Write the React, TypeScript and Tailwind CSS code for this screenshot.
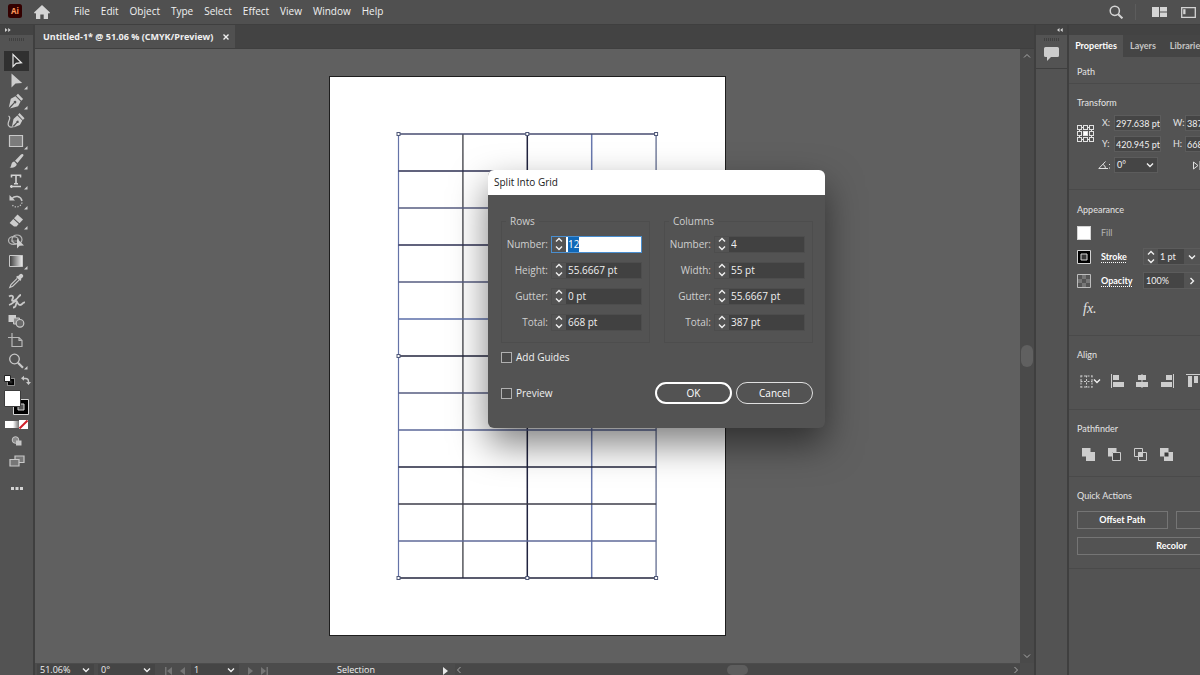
import { useEffect, useRef } from 'react';
import type { ReactNode } from 'react';

const MENUS = ['File', 'Edit', 'Object', 'Type', 'Select', 'Effect', 'View', 'Window', 'Help'];

interface Tool {
  name: string;
  hasMore?: boolean;
  icon: ReactNode;
}

const TOOLS: Tool[] = [
  {
    name: 'Selection',
    icon: <path d="M6 2.5v12l3.2-3.2 5.3-.6z" fill="none" stroke="#e6e6e6" strokeWidth="1.2" />,
  },
  { name: 'Direct Selection', hasMore: true, icon: <path d="M4.5 1.5v14l4-4 6.700-.5z" /> },
  {
    name: 'Pen',
    hasMore: true,
    icon: (
      <>
        <path d="M11 1.700 16.100 7l-1.800 1.800L9.200 3.500z" />
        <path d="m8.400 4.300 5.200 5.200-2.500 4.800L3 16.500l4.600-5.200a1.300 1.300 0 1 0-.8-.8L1.800 15.500l2-8.700z" />
      </>
    ),
  },
  {
    name: 'Curvature',
    icon: (
      <>
        <path d="M12.500 1 17.500 6.200l-1.600 1.700L11 2.700z" />
        <path d="m10.300 3.500 5 5.100-2.400 4.500L6.500 15.500l3.700-4.500a1.200 1.200 0 1 0-.8-.7l-4.500 4.500L6.500 7z" />
        <path d="M1.500 4c4 2-2 6 0 9.500 1 2 3 2 5 1" fill="none" stroke="#c8c8c8" strokeWidth="1.200" />
      </>
    ),
  },
  {
    name: 'Rectangle',
    hasMore: true,
    icon: <path d="M2.500 3.500h13v11h-13z" fill="#7c7c7c" stroke="#c8c8c8" strokeWidth="1.200" />,
  },
  {
    name: 'Paintbrush',
    hasMore: true,
    icon: (
      <>
        <path d="M16 2.200c.8.7.5 1.300 0 2L10.500 11 8 8.800 14 2.600c.7-.7 1.300-1 2-.4z" />
        <path d="M7.300 9.500 9.700 12c-.2 3-3.500 4-7.200 3.600 1.800-.8 1.500-2 2-3.600.4-1.400 1.500-2.300 2.800-2.500z" />
      </>
    ),
  },
  {
    name: 'Type',
    hasMore: true,
    icon: (
      <path
        d="M4.500 5.500V3.300h9v2.200M9 3.300v8.400M7 11.700h4M3 14.500h11M4.500 13v3"
        fill="none"
        stroke="#d2d2d2"
        strokeWidth="1.600"
      />
    ),
  },
  {
    name: 'Rotate',
    hasMore: true,
    icon: (
      <>
        <path d="M5 6.500C8 3 14 4 15 9" fill="none" stroke="#c8c8c8" strokeWidth="1.500" />
        <path d="M2.500 3v5.500H8z" />
        <path
          d="M15 10.500c-1 5-8 6-10.500 1.500"
          fill="none"
          stroke="#c8c8c8"
          strokeWidth="1.200"
          strokeDasharray="1.200 1.500"
        />
      </>
    ),
  },
  {
    name: 'Eraser',
    hasMore: true,
    icon: (
      <>
        <path d="m10.500 2.500 5.500 5-3.500 3.700L7 6.200z" />
        <path d="m6.300 7 5.400 5-2.200 2.500H7L2.600 11z" />
      </>
    ),
  },
  {
    name: 'Shape Builder',
    icon: (
      <>
        <g fill="none" stroke="#b8b8b8" strokeWidth="1.200">
          <ellipse cx="6.500" cy="8.500" rx="5" ry="3.800" />
          <ellipse cx="10" cy="7.500" rx="5" ry="4.500" />
          <path d="M4 9h7" strokeDasharray="1.200 1" />
        </g>
        <path d="M10 6.500v10l2.600-2.800 4.400-.2z" />
      </>
    ),
  },
  {
    name: 'Gradient',
    hasMore: true,
    icon: <path d="M2.500 3.500h13v11h-13z" fill="url(#toolGradient)" stroke="#c8c8c8" />,
  },
  {
    name: 'Eyedropper',
    icon: (
      <>
        <path d="M15.500 2.500c1.200 1.200.8 2.200 0 3l-1.700 1.600.6.700-1.300 1.200-4-4 1.200-1.300.7.600 1.600-1.700c.9-.8 1.900-1.200 2.900-.1z" />
        <path
          d="M10.200 6.300 4 12.500 2.800 15.500l2.900-1.200L12 8.100"
          fill="none"
          stroke="#c8c8c8"
          strokeWidth="1.200"
        />
      </>
    ),
  },
  {
    name: 'Puppet Warp',
    icon: (
      <path
        d="M2 4.500c3-2 5 0 3.500 2.500s1 2.500 3.500.5 3-4.500 5-4.500M2 13c4-1 5-4 7-4s1 4 4 4 2-3 5-2.500M6 15.500c4 0 2-3 4-5.500"
        fill="none"
        stroke="#c8c8c8"
        strokeWidth="1.800"
      />
    ),
  },
  {
    name: 'Blend',
    icon: (
      <>
        <path d="M1.500 3h7.500v7H1.500z" />
        <path d="M6.500 6h6v6h-6z" fill="#8b8b8b" stroke="#c8c8c8" />
        <circle cx="13" cy="11.300" r="3.800" fill="#6a6a6a" stroke="#c8c8c8" strokeWidth="1.200" />
      </>
    ),
  },
  {
    name: 'Artboard',
    icon: (
      <path
        d="M5 1v13.500h10V8.500L12 5.500H1M12 5.500v3h3"
        fill="none"
        stroke="#b8b8b8"
        strokeWidth="1.200"
      />
    ),
  },
  {
    name: 'Zoom',
    hasMore: true,
    icon: (
      <g fill="none" stroke="#c8c8c8">
        <circle cx="7.500" cy="7" r="4.800" strokeWidth="1.300" />
        <path d="m11 10.800 5 5" strokeWidth="2.200" />
      </g>
    ),
  },
];

interface FieldProps {
  id: string;
  label: string;
  value: string;
  selected?: boolean;
}

const ROW_FIELDS: FieldProps[] = [
  { id: 'row-number', label: 'Number:', value: '12', selected: true },
  { id: 'row-height', label: 'Height:', value: '55.6667 pt' },
  { id: 'row-gutter', label: 'Gutter:', value: '0 pt' },
  { id: 'row-total', label: 'Total:', value: '668 pt' },
];

const COLUMN_FIELDS: FieldProps[] = [
  { id: 'col-number', label: 'Number:', value: '4' },
  { id: 'col-width', label: 'Width:', value: '55 pt' },
  { id: 'col-gutter', label: 'Gutter:', value: '55.6667 pt' },
  { id: 'col-total', label: 'Total:', value: '387 pt' },
];

type Direction = 'up' | 'down' | 'left' | 'right';

const CHEVRONS: Record<Direction, string> = {
  up: 'M1 5.500 4 2.500l3 3',
  down: 'M1 2.500l3 3 3-3',
  left: 'M5.500 1l-3 3 3 3',
  right: 'M2.500 1l3 3-3 3',
};

function Chevron({ dir, dim }: { dir: Direction; dim?: boolean }) {
  return (
    <svg viewBox="0 0 8 8" className="size-2 shrink-0" aria-hidden="true">
      <path d={CHEVRONS[dir]} fill="none" stroke={dim ? '#a8a8a8' : '#f0f0f0'} strokeWidth={dim ? 1 : 1.4} />
    </svg>
  );
}

function Stepper({ label }: { label: string }) {
  return (
    <div className="flex w-[14px] shrink-0 flex-col items-center justify-center">
      <button type="button" aria-label={`Increase ${label}`} className="flex">
        <Chevron dir="up" />
      </button>
      <button type="button" aria-label={`Decrease ${label}`} className="flex">
        <Chevron dir="down" />
      </button>
    </div>
  );
}

function MenuBar() {
  return (
    <header className="flex h-[25px] shrink-0 items-center border-b border-[#3f3f3f] bg-[#505050] pb-[2px] pr-1">
      <svg viewBox="0 0 14 14" className="ml-2 size-[14px]" aria-hidden="true">
        <rect width="14" height="14" rx="2.500" fill="#330000" />
        <text x="7" y="10" textAnchor="middle" fontSize="8" fontWeight="700" fill="#ff9a5a">
          Ai
        </text>
      </svg>
      <button type="button" aria-label="Home" className="ml-3 mt-[2px]">
        <svg viewBox="0 0 16 14" className="h-[14px] w-4" fill="#d4d4d4">
          <path d="M8 0 16 7.500l-1 1.200-1-.8V14H9.700V9.500H6.300V14H2V7.900l-1 .8L0 7.500z" />
        </svg>
      </button>
      <nav className="ml-6 flex gap-[11px]" aria-label="Main menu">
        {MENUS.map((menu) => (
          <button key={menu} type="button" className="text-[10px] leading-4 text-[#f0f0f0]">
            {menu}
          </button>
        ))}
      </nav>
      <div className="ml-auto flex items-center pt-[2px]">
        <button type="button" aria-label="Search" className="mr-3">
          <svg viewBox="0 0 14 14" className="size-[14px]" fill="none" stroke="#d4d4d4">
            <circle cx="5.800" cy="5.800" r="4.600" strokeWidth="1.500" />
            <path d="m9.200 9.200 4.200 4.200" strokeWidth="2" />
          </svg>
        </button>
        <span className="mr-4 h-4 w-px bg-[#5c5c5c]" />
        <button type="button" aria-label="Arrange documents" className="mr-[14px]">
          <svg viewBox="0 0 15 10" className="h-[10px] w-[15px]" fill="#d4d4d4">
            <path d="M0 0h7v10H0zM8 0h7v4.500H8zM8 5.500h7V10H8z" />
          </svg>
        </button>
        <button type="button" aria-label="Workspace">
          <svg viewBox="0 0 15 11" className="h-[11px] w-[15px]">
            <path d="M.7.7h13.600v9.600H.7z" fill="none" stroke="#d4d4d4" strokeWidth="1.300" />
            <path d="M2.200 2.200h2.300v5H2.200z" fill="#d4d4d4" />
          </svg>
        </button>
      </div>
    </header>
  );
}

function Gripper() {
  return (
    <span className="flex gap-px" aria-hidden="true">
      {[0, 1, 2, 3, 4, 5, 6, 7].map((n) => (
        <span key={n} className="h-[3px] w-px bg-[#404040]" />
      ))}
    </span>
  );
}

function Toolbar() {
  return (
    <aside className="flex w-[35px] shrink-0 flex-col border-r-2 border-[#3f3f3f] bg-[#535353]" aria-label="Tools">
      <div className="flex h-[10px] items-center bg-[#434343] pl-[5px]">
        <svg viewBox="0 0 6 4" className="h-1 w-[6px]" fill="#d4d4d4" aria-hidden="true">
          <path d="m0 0 2.500 2L0 4zM3.200 0l2.500 2-2.500 2z" />
        </svg>
      </div>
      <div className="flex h-4 justify-center pt-[3px]">
        <Gripper />
      </div>
      {TOOLS.map((tool, index) => (
        <button
          key={tool.name}
          type="button"
          aria-label={tool.name}
          className={`mx-1 flex h-5 shrink-0 items-center justify-center ${
            index === 0 ? 'bg-[#303030]' : ''
          }`}
        >
          <svg viewBox="0 0 23 18" className="h-[18px] w-[23px]" fill="#cdcdcd">
            <defs>
              <linearGradient id="toolGradient">
                <stop offset="0" stopColor="#3a3a3a" />
                <stop offset="1" stopColor="#f0f0f0" />
              </linearGradient>
            </defs>
            <svg x="2" y="0" width="18" height="18" viewBox="0 0 18 18">
              {tool.icon}
            </svg>
            {tool.hasMore && <path d="M22.500 14v3.500H19z" />}
          </svg>
        </button>
      ))}
      <div className="mt-1 flex h-[15px] shrink-0 items-start justify-between pl-1 pr-[2px]">
        <button type="button" aria-label="Default fill and stroke" className="flex">
          <svg viewBox="0 0 11 11" className="size-[11px]">
            <path d="M4.500 4.500h5v5h-5z" fill="#222" stroke="#000" strokeWidth="2" />
            <path d="M3.500 3.500h7v7h-7z" fill="none" stroke="#ccc" strokeWidth=".6" />
            <path d="M.5.500h6v6h-6z" fill="#fff" stroke="#222" />
          </svg>
        </button>
        <button type="button" aria-label="Swap fill and stroke" className="flex">
          <svg viewBox="0 0 10 10" className="size-[10px]" fill="#c8c8c8">
            <path d="M2 3.500h2.500q3 0 3 3V8" fill="none" stroke="#c8c8c8" strokeWidth="1.400" />
            <path d="M3 .8v5L0 3.300zM5 7h5l-2.500 3z" />
          </svg>
        </button>
      </div>
      <svg viewBox="0 0 25 26" className="ml-1 h-[26px] w-[25px] shrink-0" role="img" aria-label="Fill and stroke colors">
        <path d="M9.500 9.500h15v15h-15z" fill="#000" stroke="#d4d4d4" />
        <path d="M14 14h6v6h-6z" fill="#535353" stroke="#d4d4d4" />
        <path d="M.5.500h16v16H.5z" fill="#fff" stroke="#3c3c3c" />
      </svg>
      <div className="ml-[5px] mt-1 flex h-[9px] shrink-0 items-center">
        <span className="h-[7px] w-2 bg-white" />
        <span className="h-[7px] w-[6px] bg-gradient-to-r from-white to-[#777777]" />
        <svg viewBox="0 0 9 9" className="size-[9px]" aria-hidden="true">
          <path d="M0 0h9v9H0z" fill="#fff" />
          <path d="M.5 8.500l8-8" stroke="#d0202a" strokeWidth="2" />
        </svg>
      </div>
      <button type="button" aria-label="Drawing mode" className="mt-[7px] flex justify-center">
        <svg viewBox="0 0 12 10" className="h-[10px] w-3">
          <circle cx="4.500" cy="4" r="3.300" fill="#8a8a8a" stroke="#c8c8c8" />
          <path d="M5 4.500h5.500v5H5z" fill="#c8c8c8" />
        </svg>
      </button>
      <button type="button" aria-label="Screen mode" className="mt-[9px] flex justify-center">
        <svg viewBox="0 0 16 12" className="h-3 w-4" fill="#777777" stroke="#c8c8c8" strokeWidth="1.200">
          <path d="M6 1h9v6.500H6z" />
          <path d="M1 4.500h9V11H1z" />
        </svg>
      </button>
      <button type="button" aria-label="Edit toolbar" className="mt-5 flex justify-center">
        <svg viewBox="0 0 12 3" className="h-[3px] w-3" fill="#d4d4d4">
          <path d="M0 0h3v3H0zM4.500 0h3v3h-3zM9 0h3v3H9z" />
        </svg>
      </button>
    </aside>
  );
}

// Stroke shades follow how each guide line lands on the pixel grid.
const ROW_LINES = [
  '#474d70', '#2c2f52', '#565c80', '#2c2f52', '#565c80', '#5b6ea8', '#22253c',
  '#565c80', '#5b6798', '#22253c', '#3c3d4a', '#5f6a98', '#22253c',
];
const COLUMN_LINES = ['#6573a8', '#55565c', '#20233f', '#6878ae', '#77809f'];

function SplitPath() {
  const left = 2.5;
  const cellWidth = 64.4;
  const cellHeight = 37;
  return (
    <svg viewBox="0 0 264 450" className="h-[450px] w-[264px]" role="img" aria-label="Rectangle split into a grid">
      {COLUMN_LINES.map((color, i) => (
        <path key={`c${i}`} d={`M${left + i * cellWidth} 3v444`} stroke={color} strokeWidth={i === 0 ? 1.2 : 1.5} />
      ))}
      {ROW_LINES.map((color, i) => (
        <path key={`r${i}`} d={`M${left} ${3 + i * cellHeight}h${cellWidth * 4}`} stroke={color} strokeWidth="1.500" />
      ))}
      {[0, 2, 4].map((col) =>
        [0, 6, 12].map((row) =>
          col === 2 && row === 6 ? null : (
            <rect
              key={`${col}-${row}`}
              x={left + col * cellWidth - 1.5}
              y={1.5 + row * cellHeight}
              width="3"
              height="3"
              fill="#fff"
              stroke="#4f5878"
            />
          ),
        ),
      )}
    </svg>
  );
}

function GridField({ id, label, value, selected }: FieldProps) {
  const inputRef = useRef<HTMLInputElement>(null);

  useEffect(() => {
    if (selected) inputRef.current?.select();
  }, [selected]);

  return (
    <div className="flex h-[26px] items-center">
      <label htmlFor={id} className="flex-1 whitespace-nowrap pr-[3px] text-right text-[#cfcfcf]">
        {label}
      </label>
      <div className={`flex h-[17px] border ${selected ? 'border-[#4a8fd0]' : 'border-[#4d4d4d]'}`}>
        <Stepper label={label} />
        <input
          ref={inputRef}
          id={id}
          defaultValue={value}
          className={`w-[75px] px-[2px] outline-none selection:bg-[#1068b8] selection:text-white ${
            selected ? 'bg-white text-black' : 'bg-[#414141] text-[#f0f0f0]'
          }`}
        />
      </div>
    </div>
  );
}

function FieldGroup({ title, fields }: { title: string; fields: FieldProps[] }) {
  return (
    <fieldset className="w-[149px] border border-[#4d4d4d] pb-[7px] pl-1 pr-[7px] pt-[2px]">
      <legend className="px-1 leading-4 text-[#cfcfcf]">{title}</legend>
      {fields.map((field) => (
        <GridField key={field.id} {...field} />
      ))}
    </fieldset>
  );
}

function CheckOption({ label }: { label: string }) {
  return (
    <label className="flex h-4 items-center gap-1 text-[#f0f0f0]">
      <input type="checkbox" className="size-[11px] appearance-none border border-[#b0b0b0] bg-[#4a4a4a]" />
      {label}
    </label>
  );
}

function SplitIntoGridDialog() {
  return (
    <div
      role="dialog"
      aria-labelledby="split-title"
      className="absolute left-[453px] top-[121px] w-[337px] overflow-hidden rounded-md bg-[#535353] text-[10px] shadow-[0_16px_36px_rgba(0,0,0,0.5)]"
    >
      <h2 id="split-title" className="bg-white px-[6px] text-[10px] leading-[25px] text-[#1a1a1a]">
        Split Into Grid
      </h2>
      <form className="pb-6 pl-[13px] pr-3 pt-[18px]">
        <div className="flex justify-between">
          <FieldGroup title="Rows" fields={ROW_FIELDS} />
          <FieldGroup title="Columns" fields={COLUMN_FIELDS} />
        </div>
        <div className="mt-[6px] flex">
          <CheckOption label="Add Guides" />
        </div>
        <div className="mt-[17px] flex items-center gap-1">
          <CheckOption label="Preview" />
          <button type="button" className="ml-auto h-[22px] w-[77px] rounded-full border-2 border-white text-white">
            OK
          </button>
          <button type="button" className="h-[22px] w-[77px] rounded-full border border-[#e0e0e0] text-white">
            Cancel
          </button>
        </div>
      </form>
    </div>
  );
}

function StatusSelect({ label, value }: { label: string; value: string }) {
  return (
    <button type="button" aria-label={label} className="mr-1 flex w-[57px] items-center justify-between bg-[#454545] pl-[3px] pr-1">
      {value}
      <Chevron dir="down" />
    </button>
  );
}

function StatusBar() {
  return (
    <footer className="flex h-3 shrink-0 bg-[#4c4c4c] pl-[2px] pt-px text-[9px] leading-3 text-[#f0f0f0]">
      <StatusSelect label="Zoom level" value="51.06%" />
      <StatusSelect label="Rotate view" value="0°" />
      <svg viewBox="0 0 22 8" className="ml-[6px] mt-[3px] h-2 w-[22px]" fill="#757575" aria-hidden="true">
        <path d="M0 0h1.500v8H0zM7 0v8L2 4zM20 0v8l-5-4z" />
      </svg>
      <button type="button" aria-label="Artboard number" className="ml-1 flex w-12 items-center justify-between bg-[#454545] pl-[3px] pr-1">
        1
        <Chevron dir="down" />
      </button>
      <svg viewBox="0 0 22 8" className="ml-2 mt-[3px] h-2 w-[22px]" fill="#757575" aria-hidden="true">
        <path d="M1 0l5 4-5 4zM14 0l5 4-5 4zM19.500 0H21v8h-1.500z" />
      </svg>
      <span className="w-[174px] text-center">Selection</span>
      <svg viewBox="0 0 5 8" className="mt-[3px] h-2 w-[5px]" fill="#e8e8e8" aria-hidden="true">
        <path d="m0 0 5 4-5 4z" />
      </svg>
      <div className="ml-[7px] mr-[14px] flex flex-1 items-center justify-between bg-[#484848]">
        <Chevron dir="left" dim />
        <span className="h-[10px] w-[21px] rounded-full bg-[#5e5e5e]" />
        <Chevron dir="right" dim />
      </div>
    </footer>
  );
}

function DocumentArea() {
  return (
    <main className="flex min-w-0 flex-1 flex-col">
      <div className="flex h-6 shrink-0 border-b border-[#3f3f3f] bg-[#434343]">
        <div className="flex items-center gap-[10px] bg-[#505050] pl-2 pr-[6px] text-[9px] font-bold text-[#f0f0f0]">
          <span className="whitespace-nowrap">Untitled-1* @ 51.06 % (CMYK/Preview)</span>
          <button type="button" aria-label="Close document">
            <svg viewBox="0 0 6 6" className="size-[6px]" stroke="#f0f0f0" strokeWidth="1.400">
              <path d="m.5.500 5 5M5.500.500l-5 5" />
            </svg>
          </button>
        </div>
      </div>
      <div className="relative flex min-h-0 flex-1">
        <div className="flex flex-1 items-center justify-center overflow-hidden bg-[#606060]">
          <div className="flex h-[560px] w-[397px] items-center justify-center border border-[#1e1e1e] bg-white">
            <SplitPath />
          </div>
        </div>
        <div className="flex w-[14px] flex-col items-center justify-between bg-[#4a4a4a] py-[3px]">
          <Chevron dir="up" dim />
          <span className="h-[22px] w-3 rounded-full bg-[#606060]" />
          <Chevron dir="down" dim />
        </div>
        <SplitIntoGridDialog />
      </div>
      <StatusBar />
    </main>
  );
}

function CommentsDock() {
  return (
    <aside className="flex w-[35px] shrink-0 flex-col border-x-2 border-[#3f3f3f] bg-[#535353]" aria-label="Comments">
      <div className="flex h-[10px] items-center justify-end bg-[#434343] pr-1">
        <svg viewBox="0 0 6 4" className="h-1 w-[6px]" fill="#d4d4d4" aria-hidden="true">
          <path d="M2.500 0v4L0 2zM5.700 0v4L3.200 2z" />
        </svg>
      </div>
      <div className="flex h-[34px] flex-col items-center gap-[6px] border-b border-[#3f3f3f] pt-[3px]">
        <Gripper />
        <button type="button" aria-label="Comments">
          <svg viewBox="0 0 15 14" className="h-[14px] w-[15px]" fill="#cdcdcd">
            <path d="M1.500 0h12Q15 0 15 1.500v7q0 1.500-1.500 1.500H7l-4 4v-4H1.500Q0 10 0 8.500v-7Q0 0 1.500 0z" />
          </svg>
        </button>
      </div>
    </aside>
  );
}

function PanelSection({ title, className, children }: { title: string; className: string; children?: ReactNode }) {
  return (
    <section className={`border-b border-[#4a4a4a] pl-2 ${className}`}>
      <h3 className="leading-4">{title}</h3>
      {children}
    </section>
  );
}

function TransformField({ id, label, value }: { id: string; label: string; value: string }) {
  return (
    <div className="flex items-center">
      <label htmlFor={id} className="w-3">
        {label}
      </label>
      <input
        id={id}
        defaultValue={value}
        className="h-4 w-[47px] border border-[#5c5c5c] bg-[#454545] pl-px text-[#f0f0f0]"
      />
    </div>
  );
}

const ALIGN_ICONS = [
  { name: 'Horizontal align left', d: 'M0 0h1v14H0zM2 1h6v5H2zM2 8h11v5H2z' },
  { name: 'Horizontal align center', d: 'M5.500 0h1v14h-1zM2 1h8v5H2zM0 8h12v5H0z' },
  { name: 'Horizontal align right', d: 'M12 0h1v14h-1zM5 1h6v5H5zM0 8h11v5H0z' },
  { name: 'Vertical align top', d: 'M0 0h14v1H0zM2 2h4v11H2zM8 2h4v7H8z' },
];

function PathfinderIcons() {
  return (
    <div className="mt-2 flex h-[18px] items-center gap-[13px] pl-[5px]">
      <button type="button" aria-label="Unite">
        <svg viewBox="0 0 13 13" className="size-[13px]" fill="#cdcdcd">
          <path d="M0 0h8.500v4H13v9H4V8.500H0z" />
        </svg>
      </button>
      <button type="button" aria-label="Minus front">
        <svg viewBox="0 0 13 13" className="size-[13px]">
          <path d="M0 0h8.500v4H4v4.500H0z" fill="#cdcdcd" />
          <path d="M4.500 4.500h8v8h-8z" fill="#484848" stroke="#cdcdcd" />
        </svg>
      </button>
      <button type="button" aria-label="Intersect">
        <svg viewBox="0 0 13 13" className="size-[13px]" fill="none" stroke="#cdcdcd">
          <path d="M.5.500h8v8h-8zM4.500 4.500h8v8h-8z" />
          <path d="M4.500 4.500h4v4h-4z" fill="#cdcdcd" />
        </svg>
      </button>
      <button type="button" aria-label="Exclude">
        <svg viewBox="0 0 13 13" className="size-[13px]" fill="#cdcdcd">
          <path d="M0 0h8.500v4H13v9H4V8.500H0z" />
          <path d="M4.500 4.500h4v4h-4z" fill="#3c3c3c" />
        </svg>
      </button>
    </div>
  );
}

function ReferencePoint() {
  return (
    <svg viewBox="0 0 17 17" className="mt-[10px] size-[17px] shrink-0" fill="none" stroke="#e0e0e0" aria-hidden="true">
      {[0, 1, 2].map((row) =>
        [0, 1, 2].map((col) => (
          <rect
            key={`${row}-${col}`}
            x={0.5 + col * 6}
            y={0.5 + row * 6}
            width="4"
            height="4"
            fill={row === 1 && col === 1 ? '#ffffff' : 'none'}
          />
        )),
      )}
      <path d="M5 2.500h1M11 2.500h1M5 14.500h1M11 14.500h1M2.500 5v1M2.500 11v1M14.500 5v1M14.500 11v1" />
    </svg>
  );
}

function PropertiesPanel() {
  return (
    <aside
      className="w-[131px] shrink-0 overflow-hidden bg-[#535353] font-['Lato','Open_Sans',sans-serif] text-[9px] text-[#e4e4e4]"
      aria-label="Properties"
    >
      <div className="h-[10px] bg-[#434343]" />
      <div className="flex h-[22px] bg-[#454545] font-bold" role="tablist">
        <button type="button" role="tab" aria-selected="true" className="w-[54px] shrink-0 bg-[#535353] text-white">
          Properties
        </button>
        <button type="button" role="tab" aria-selected="false" className="w-[40px] shrink-0 text-[#c4c4c4]">
          Layers
        </button>
        <button type="button" role="tab" aria-selected="false" className="w-[48px] shrink-0 text-[#c4c4c4]">
          Libraries
        </button>
      </div>
      <div className="w-[197px]">
        <PanelSection title="Path" className="h-[27px] pt-[7px]" />
        <PanelSection title="Transform" className="h-[106px] pt-[11px]">
          <div className="mt-1 flex">
            <ReferencePoint />
            <div className="ml-2 flex flex-col gap-[5px]">
              <TransformField id="x" label="X:" value="297.638 pt" />
              <TransformField id="y" label="Y:" value="420.945 pt" />
              <div className="flex items-center">
                <svg viewBox="0 0 12 9" className="-ml-1 mr-1 h-[9px] w-3" fill="none" stroke="#e0e0e0" aria-hidden="true">
                  <path d="M7.500.500.800 7.500H10M5 3.500q2.500 1 2.500 4M11.500 3v1M11.500 6.500v1" />
                </svg>
                <button
                  type="button"
                  aria-label="Rotation angle"
                  className="flex h-4 w-[44px] items-center justify-between border border-[#5c5c5c] bg-[#454545] pl-[2px] pr-[3px] text-[#f0f0f0]"
                >
                  0°
                  <Chevron dir="down" />
                </button>
              </div>
            </div>
            <div className="ml-3 flex flex-col gap-[5px]">
              <div className="flex">
                <TransformField id="w" label="W:" value="387 pt" />
              </div>
              <div className="flex">
                <TransformField id="h" label="H:" value="668 pt" />
              </div>
              <svg viewBox="0 0 14 9" className="ml-5 mt-1 h-[9px] w-[14px]" fill="none" stroke="#e0e0e0" aria-hidden="true">
                <path d="M.500 1v7L5 4.500zM7 0v9M13.500 1v7L9 4.500z" />
              </svg>
            </div>
          </div>
        </PanelSection>
        <PanelSection title="Appearance" className="h-[146px] pt-3">
          <div className="mt-[6px] flex h-[17px] items-center gap-[10px]">
            <span className="size-[14px] border border-[#d4d4d4] bg-white" />
            <span className="text-[#b4b4b4]">Fill</span>
          </div>
          <div className="mt-[7px] flex h-[17px] items-center">
            <svg viewBox="0 0 14 14" className="size-[14px]" aria-hidden="true">
              <path d="M.5.500h13v13H.5z" fill="#000" stroke="#d4d4d4" />
              <path d="M4 4h6v6H4z" fill="#333" stroke="#d4d4d4" />
            </svg>
            <button type="button" className="ml-[10px] w-[42px] text-left font-bold text-white underline decoration-dotted underline-offset-2">
              Stroke
            </button>
            <div className="flex h-[17px] border border-[#5c5c5c]">
              <Stepper label="stroke weight" />
              <input aria-label="Stroke weight" defaultValue="1 pt" className="w-[26px] bg-[#454545] pl-[2px] text-[#f0f0f0]" />
              <button type="button" aria-label="Stroke presets" className="flex w-4 items-center justify-center">
                <Chevron dir="down" />
              </button>
            </div>
          </div>
          <div className="mt-[7px] flex h-[17px] items-center">
            <svg viewBox="0 0 14 14" className="size-[14px]" aria-hidden="true">
              <path d="M.5.500h13v13H.5z" fill="#777777" stroke="#bdbdbd" />
              <path d="M1 1h4v4H1zM9 1h4v4H9zM5 5h4v4H5zM1 9h4v4H1zM9 9h4v4H9z" fill="#555555" />
            </svg>
            <button type="button" className="ml-[10px] w-[42px] text-left font-bold text-white underline decoration-dotted underline-offset-2">
              Opacity
            </button>
            <div className="flex h-[17px] border border-[#5c5c5c]">
              <input aria-label="Opacity" defaultValue="100%" className="w-10 bg-[#454545] pl-[2px] text-[#f0f0f0]" />
              <button type="button" aria-label="Opacity slider" className="flex w-4 items-center justify-center">
                <Chevron dir="right" />
              </button>
            </div>
          </div>
          <button type="button" className="ml-[6px] mt-3 font-['Liberation_Serif',serif] text-sm leading-4 italic">
            fx.
          </button>
        </PanelSection>
        <PanelSection title="Align" className="h-[74px] pt-[11px]">
          <div className="mt-[10px] flex h-4 items-center">
            <button type="button" aria-label="Align to" className="ml-[3px] mr-[10px] flex items-center">
              <svg viewBox="0 0 13 13" className="size-[13px]" fill="none" stroke="#cdcdcd" strokeDasharray="2 1.500">
                <path d="M.5 1h12M.5 6.500h12M.5 12h12M1 .500v12M6.500.500v12M12 .500v12" />
              </svg>
              <Chevron dir="down" />
            </button>
            <div className="flex gap-[11px]">
              {ALIGN_ICONS.map((icon) => (
                <button key={icon.name} type="button" aria-label={icon.name}>
                  <svg viewBox="0 0 14 14" className="size-[14px]" fill="#cdcdcd">
                    <path d={icon.d} />
                  </svg>
                </button>
              ))}
            </div>
          </div>
        </PanelSection>
        <PanelSection title="Pathfinder" className="h-[67px] pt-[11px]">
          <PathfinderIcons />
        </PanelSection>
        <PanelSection title="Quick Actions" className="h-[92px] pt-[11px]">
          <div className="mt-[7px] grid grid-cols-2 gap-2 font-bold text-white">
            <button type="button" className="h-[18px] border border-[#757575]">
              Offset Path
            </button>
            <button type="button" className="h-[18px] border border-[#757575]" aria-label="More quick actions" />
            <button type="button" className="col-span-2 h-[18px] border border-[#757575]">
              Recolor
            </button>
          </div>
        </PanelSection>
      </div>
    </aside>
  );
}

export default function App() {
  return (
    <div className="flex h-screen flex-col overflow-hidden bg-[#535353] font-['Open_Sans','Noto_Sans',sans-serif]">
      <MenuBar />
      <div className="flex min-h-0 flex-1">
        <Toolbar />
        <DocumentArea />
        <CommentsDock />
        <PropertiesPanel />
      </div>
    </div>
  );
}
